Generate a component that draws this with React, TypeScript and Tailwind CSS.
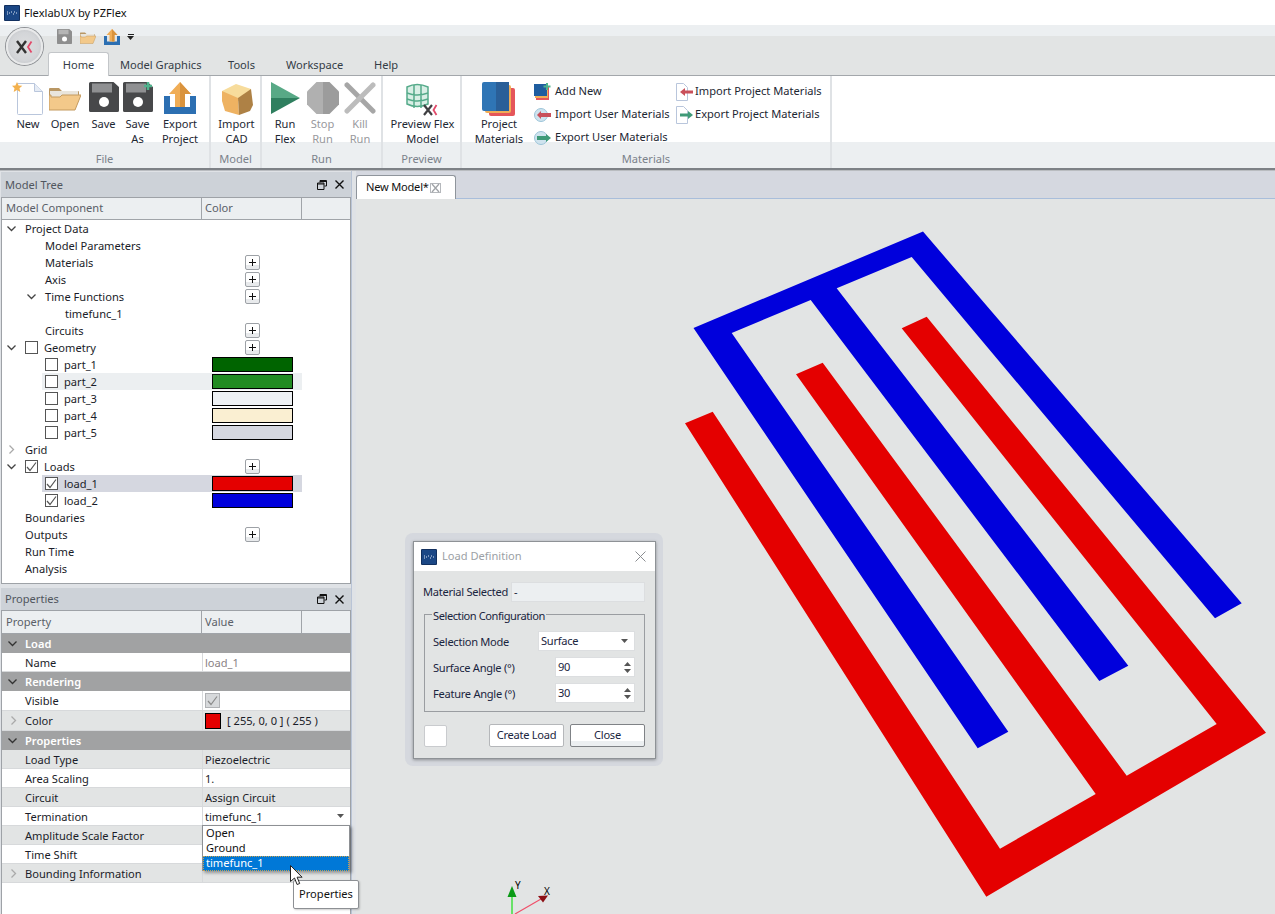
import React from "react";

const Logo = ({ s = 16 }: { s?: number }) => (
  <svg width={s} height={s} viewBox="0 0 16 16" className="shrink-0">
    <rect width="16" height="16" rx="1" fill="#12305f" />
    <rect x="1" y="1" width="14" height="14" fill="#1b4785" />
    <path d="M3 7h1M5 8h1M3 9h1M7 7h1M9 9h1M10 7h1M12 8h1" stroke="#dfe8f5" strokeWidth="1" />
  </svg>
);

const NewIcon = () => (
  <svg width="32" height="34" viewBox="0 0 32 34">
    <path d="M5.500 1.500h17l8 8v22a1 1 0 0 1-1 1h-23a1 1 0 0 1-1-1z" fill="#fff" stroke="#b9c6dc" />
    <path d="M22.500 1.500v8h8" fill="#e6ecf5" stroke="#b9c6dc" />
    <path d="M5 0l1.600 3.400 3.700.4-2.800 2.500.8 3.700L5 8l-3.300 2 .8-3.700L0 3.800l3.400-.4z" fill="#f3b14e" />
  </svg>
);
const OpenIcon = ({ s = 32 }: { s?: number }) => (
  <svg width={s} height={s * 0.75} viewBox="0 0 32 24">
    <path d="M0 2a1 1 0 0 1 1-1h9l3 3h16a1 1 0 0 1 1 1v4H0z" fill="#b99764" />
    <path d="M1 4h28v6H1z" fill="#e9e5dc" />
    <path d="M0 23V8h2v2h9l2-2h19l-6 15z" fill="#f3c98a" stroke="#c49a5e" strokeWidth="1" />
  </svg>
);
const Floppy = ({ s = 30, plus = false, c = "#47484a", l = "#8f9092" }: { s?: number; plus?: boolean; c?: string; l?: string }) => (
  <svg width={s} height={s} viewBox="0 0 30 30">
    <path d="M1.500 0h23L30 5v23.500a1.500 1.500 0 0 1-1.500 1.500h-27A1.500 1.500 0 0 1 0 28.500V1.500A1.500 1.500 0 0 1 1.500 0z" fill={c} />
    <rect x="3" y="1.500" width="20" height="9" fill={l} />
    <circle cx="15" cy="20" r="5" fill="#fff" />
    {plus && <path d="M25 0v8M21 4h8" stroke="#4fb38d" strokeWidth="2.500" />}
  </svg>
);
const ExportIcon = ({ s = 32 }: { s?: number }) => (
  <svg width={s} height={s} viewBox="0 0 32 32">
    <path d="M0 14h6v11h20V14h6v18H0z" fill="#2c6fb2" />
    <path d="M16 0l11 12h-6v13H11V12H5z" fill="#f0ad56" />
    <path d="M16 0l11 12h-6v13h-5z" fill="#d9933d" />
  </svg>
);
const CubeIcon = () => (
  <svg width="34" height="34" viewBox="0 0 34 34">
    <path d="M2 9l14-7 15 5-2 10-11 2L5 14z" fill="#f7dc9c" />
    <path d="M2 9l16 7 1 17-14-4-3-10z" fill="#eeb262" />
    <path d="M18 16l13-9 2 16-3 6-11 4z" fill="#ae8145" />
  </svg>
);
const RunIcon = () => (
  <svg width="29" height="32" viewBox="0 0 29 32">
    <path d="M0 0l29 16H0z" fill="#58a986" />
    <path d="M0 16h29L0 32z" fill="#2f7f5f" />
  </svg>
);
const StopIcon = () => (
  <svg width="32" height="32" viewBox="0 0 32 32">
    <path d="M9.500 0H16v32H9.500L0 22.500v-13z" fill="#b0b0b0" />
    <path d="M16 0h6.500L32 9.500v13L22.500 32H16z" fill="#9c9c9c" />
  </svg>
);
const KillIcon = () => (
  <svg width="32" height="32" viewBox="0 0 32 32">
    <path d="M3 3l26 26" stroke="#a6a6a6" strokeWidth="5" strokeLinecap="round" />
    <path d="M29 3L3 29" stroke="#bcbcbc" strokeWidth="5" strokeLinecap="round" />
  </svg>
);
const XMark = ({ x, y, k = 1 }: { x: number; y: number; k?: number }) => (
  <g transform={`translate(${x} ${y}) scale(${k})`}>
    <path d="M0 0l8 10M8 0L0 10" stroke="#3f3f42" strokeWidth="2.200" />
    <path d="M12.500 0L9.500 5l3 5" stroke="#e24a6a" strokeWidth="1.800" fill="none" />
  </g>
);
const PreviewIcon = () => (
  <svg width="36" height="34" viewBox="0 0 36 34">
    <path d="M2 5q10-5 21 0v17q-11 5-21 0z" fill="#d9efe6" stroke="#55ab8a" strokeWidth="1.500" />
    <path d="M9 3v23M16 3v23M2 11q10 4 21 0M2 17q10 4 21 0" stroke="#55ab8a" strokeWidth="1.500" fill="none" />
    <XMark x={19} y={23} />
  </svg>
);
const BooksIcon = () => (
  <svg width="34" height="34" viewBox="0 0 34 34">
    <rect x="7" y="6" width="26" height="28" rx="2" fill="#e5565a" />
    <rect x="3" y="3" width="26" height="28" rx="2" fill="#f0ad56" />
    <rect width="27" height="29" rx="2" fill="#2f75b5" />
    <rect x="14" width="13" height="29" fill="#2a5f98" />
  </svg>
);
const AddNewIcon = () => (
  <svg width="17" height="17" viewBox="0 0 17 17">
    <rect x="2" y="4" width="13" height="13" fill="#e5565a" />
    <rect x="1" y="3" width="13" height="12" fill="#f0ad56" />
    <rect y="1" width="13" height="12" fill="#1f5d9f" />
    <path d="M13 0v7M9.500 3.500h7" stroke="#4fb38d" strokeWidth="2" />
  </svg>
);
const DiscArrow = ({ c, left }: { c: string; left: boolean }) => (
  <svg width="17" height="14" viewBox="0 0 17 14">
    <circle cx="7" cy="7" r="6.500" fill="#cfe3ee" stroke="#9cc4d8" />
    <circle cx="7" cy="7" r="2" fill="#fff" />
    {left ? <path d="M3 7l4-4v2h10v4H7v2z" fill={c} /> : <path d="M17 7l-5-4v2H3v4h9v2z" fill={c} />}
  </svg>
);
const PageArrow = ({ c, left }: { c: string; left: boolean }) => (
  <svg width="17" height="18" viewBox="0 0 17 18">
    <path d="M.5.500h7l4 4v13H.5z" fill="#fff" stroke="#b9c6dc" />
    {left ? <path d="M4 9l5-4v2.500h8v3H9V13z" fill={c} /> : <path d="M17 9l-5-4v2.500H4v3h8V13z" fill={c} />}
  </svg>
);
const Chev = ({ open, light = false }: { open: boolean; light?: boolean }) => (
  <svg width="9" height="9" viewBox="0 0 9 9">
    {open ? (
      <path d="M.5 2.500l4 4 4-4" fill="none" stroke={light ? "#333" : "#444"} strokeWidth="1.300" />
    ) : (
      <path d="M2.500.500l4 4-4 4" fill="none" stroke="#aaa" strokeWidth="1.300" />
    )}
  </svg>
);
const Check = ({ c = "#555" }: { c?: string }) => (
  <svg width="11" height="11" viewBox="0 0 11 11">
    <path d="M1 6l3 3.500L10 1.500" fill="none" stroke={c} strokeWidth="1.200" />
  </svg>
);
const Tri = ({ up = false, c = "#555" }: { up?: boolean; c?: string }) => (
  <svg width="7" height="4" viewBox="0 0 7 4">
    <path d={up ? "M0 4l3.500-4L7 4z" : "M0 0l3.500 4L7 0z"} fill={c} />
  </svg>
);

const Btn = ({ w, icon, lines, off }: { w: string; icon: React.ReactNode; lines: string[]; off?: boolean }) => (
  <div className={`${w} flex flex-col items-center shrink-0 pt-[6px]`}>
    <div className="h-[34px] shrink-0 flex items-start justify-center">{icon}</div>
    <div className={`flex flex-col items-center shrink-0 leading-[15px] whitespace-nowrap ${off ? "text-[#98999d]" : "text-[#1d2733]"}`}>
      {lines.map((l) => (
        <span key={l}>{l}</span>
      ))}
    </div>
  </div>
);

const Group = ({ w, label, children }: { w: string; label: string; children: React.ReactNode }) => (
  <div className={`${w} flex flex-col shrink-0 border-r-2 border-[#dfe2e5]`}>
    <div className="h-[66px] flex relative z-10">{children}</div>
    <div className="h-[26px] bg-[#eceff1] flex items-center justify-center text-[#7b828b] pt-[9px]">{label}</div>
  </div>
);

const Small = ({ icon, label, w = "w-[19px]" }: { icon: React.ReactNode; label: string; w?: string }) => (
  <div className="h-[23px] shrink-0 flex items-center whitespace-nowrap text-[#1d2733]">
    <div className={`${w} shrink-0 flex items-center justify-start`}>{icon}</div>
    <span>{label}</span>
  </div>
);

const PanelHeader = ({ title, h }: { title: string; h: string }) => (
  <div className={`${h} shrink-0 bg-[#cdd2d8] flex items-center pl-[4px] pr-[7px] text-[#50565e]`}>
    <span className="flex-1 pt-[1px]">{title}</span>
    <svg width="10" height="10" viewBox="0 0 10 10" className="mr-[8px]">
      <path d="M3 2.500V.5h6.500V6H7.500M.5 3h6.500v6.500H.5z" fill="none" stroke="#111" strokeWidth="1" />
      <path d="M.5 4h6.500M3 1.500h6.500" stroke="#111" strokeWidth="1" />
    </svg>
    <svg width="9" height="9" viewBox="0 0 9 9">
      <path d="M.5.5l8 8M8.500.5l-8 8" stroke="#111" strokeWidth="1.400" />
    </svg>
  </div>
);

const Box = ({ checked }: { checked?: boolean }) => (
  <div className="w-[13px] h-[13px] border border-[#555] bg-white flex items-center justify-center shrink-0">{checked && <Check />}</div>
);
const Plus = () => (
  <div className="w-[15px] h-[15px] rounded-[2px] border border-[#9da1a6] bg-[linear-gradient(#ffffff_70%,#e8eaec_70%)] flex items-center justify-center">
    <svg width="7" height="7" viewBox="0 0 7 7">
      <path d="M3.500 0v7M0 3.500h7" stroke="#111" strokeWidth="1" />
    </svg>
  </div>
);
const Swatch = ({ c }: { c: string }) => <div className={`w-[81px] h-[15px] border border-black ${c}`} />;

const TreeRow = ({ pl, arrow, box, label, plus, boxOn }: { pl: string; arrow?: "open" | "closed"; box?: boolean; boxOn?: boolean; label: string; plus?: boolean }) => (
  <div className="h-[17px] flex items-center">
    <div className={`w-[200px] flex items-center ${pl}`}>
      <div className="w-[23px] flex justify-start pl-[5px] shrink-0">{arrow && <Chev open={arrow === "open"} />}</div>
      {box && (
        <div className="mr-[6px]">
          <Box checked={boxOn} />
        </div>
      )}
      <span className="pt-[2px]">{label}</span>
    </div>
    <div className="w-[100px] flex justify-center">{plus && <Plus />}</div>
  </div>
);

const ChildRow = ({ label, c, on, hl }: { label: string; c: string; on?: boolean; hl?: string }) => (
  <div className="h-[17px] flex">
    <div className="w-[40px] shrink-0" />
    <div className={`w-[260px] flex items-center ${hl ?? ""}`}>
      <div className="w-[160px] flex items-center pl-[3px]">
        <div className="mr-[6px]">
          <Box checked={on} />
        </div>
        <span className="pt-[2px]">{label}</span>
      </div>
      <div className="w-[100px] flex justify-center">
        <Swatch c={c} />
      </div>
    </div>
  </div>
);

const ColHead = ({ a, b, h }: { a: string; b: string; h: string }) => (
  <div className={`${h} shrink-0 flex bg-[#eceff1] border-b border-[#a0a4a9] text-[#5a6068]`}>
    <div className="w-[200px] flex items-center pl-[4px] border-r border-[#a0a4a9]">{a}</div>
    <div className="w-[100px] flex items-center pl-[3px] border-r border-[#a0a4a9]">{b}</div>
    <div className="flex-1" />
  </div>
);

const GroupRow = ({ label }: { label: string }) => (
  <div className="h-[19px] shrink-0 bg-[#a1a2a3] flex items-center text-white font-semibold">
    <div className="w-[23px] pl-[6px] flex">
      <Chev open light />
    </div>
    <span className="pt-[2px]">{label}</span>
  </div>
);

const PropRow = ({ label, alt, arrow, h = "h-[19px]", children }: { label: string; alt?: boolean; arrow?: boolean; h?: string; children?: React.ReactNode }) => (
  <div className={`${h} shrink-0 flex items-center border-b border-[#d7d9db] ${alt ? "bg-[#e2e4e4]" : "bg-white"}`}>
    <div className="w-[23px] pl-[7px] flex shrink-0">{arrow && <Chev open={false} />}</div>
    <div className="w-[177px] shrink-0 pt-[2px]">{label}</div>
    <div className="flex-1 border-l border-[#d7d9db] h-full flex items-center pl-[2px]">{children}</div>
  </div>
);

const Spin = ({ v }: { v: string }) => (
  <div className="w-[80px] h-[20px] bg-white border border-[#dcdee0] flex items-center pl-[2px] pr-[3px] justify-between">
    <span>{v}</span>
    <div className="flex flex-col gap-[3px]">
      <Tri up />
      <Tri />
    </div>
  </div>
);

export default function App() {
  return (
    <div className="w-[1275px] h-[914px] relative overflow-hidden flex flex-col bg-white text-[11.1px] text-[#1d2733] font-['Noto_Sans',sans-serif]">
      <div className="h-[25px] shrink-0 flex items-center pl-[4px] gap-[4px] bg-white text-[#111]">
        <Logo />
        <span className="pt-[2px]">FlexlabUX by PZFlex</span>
      </div>

      <div className="h-[51px] shrink-0 flex flex-col bg-[linear-gradient(#eceff1_11px,#e2e4e4_11px)]">
        <div className="h-[27px] flex items-start pl-[57px] pt-[4px]">
          <div className="w-[23px]">
            <Floppy s={15} c="#8e8e8e" l="#b5b5b5" />
          </div>
          <div className="w-[24px] pt-[3px]">
            <OpenIcon s={16} />
          </div>
          <div className="w-[23px]">
            <ExportIcon s={16} />
          </div>
          <div className="pt-[5px] flex flex-col items-center gap-[1px]">
            <div className="w-[6px] h-[1px] bg-[#222]" />
            <Tri c="#222" />
          </div>
        </div>
        <div className="h-[24px] flex items-end pl-[48px] border-b border-[#a3a7ab] text-[#343c46]">
          <div className="w-[61px] h-[24px] -mb-px bg-white border border-b-0 border-[#c3c6c9] rounded-t-[3px] flex items-center justify-center pt-[1px]">Home</div>
          <div className="w-[11px]" />
          <div className="w-[108px] h-[23px] flex items-center whitespace-nowrap pt-[3px]">Model Graphics</div>
          <div className="w-[58px] h-[23px] flex items-center pt-[3px]">Tools</div>
          <div className="w-[88px] h-[23px] flex items-center pt-[3px]">Workspace</div>
          <div className="h-[23px] flex items-center pt-[3px]">Help</div>
        </div>
      </div>

      <div className="h-[92px] shrink-0 flex bg-white">
        <Group w="w-[211px]" label="File">
          <div className="w-[9px]" />
          <Btn w="w-[38px]" icon={<NewIcon />} lines={["New"]} />
          <Btn w="w-[36px]" icon={<div className="pt-[5px]"><OpenIcon /></div>} lines={["Open"]} />
          <Btn w="w-[41px]" icon={<Floppy />} lines={["Save"]} />
          <Btn w="w-[27px]" icon={<Floppy plus />} lines={["Save", "As"]} />
          <Btn w="w-[58px]" icon={<ExportIcon />} lines={["Export", "Project"]} />
        </Group>
        <Group w="w-[51px]" label="Model">
          <div className="w-[3px]" />
          <Btn w="w-[45px]" icon={<CubeIcon />} lines={["Import", "CAD"]} />
        </Group>
        <Group w="w-[121px]" label="Run">
          <div className="w-[4px]" />
          <Btn w="w-[38px]" icon={<RunIcon />} lines={["Run", "Flex"]} />
          <Btn w="w-[37px]" icon={<StopIcon />} lines={["Stop", "Run"]} off />
          <Btn w="w-[38px]" icon={<KillIcon />} lines={["Kill", "Run"]} off />
        </Group>
        <Group w="w-[79px]" label="Preview">
          <div className="w-[2px]" />
          <Btn w="w-[75px]" icon={<PreviewIcon />} lines={["Preview Flex", "Model"]} />
        </Group>
        <Group w="w-[370px]" label="Materials">
          <div className="w-[9px]" />
          <Btn w="w-[56px]" icon={<BooksIcon />} lines={["Project", "Materials"]} />
          <div className="w-[7px]" />
          <div className="flex flex-col pt-[4px] w-[142px] shrink-0">
            <Small icon={<AddNewIcon />} label="Add New" w="w-[21px]" />
            <Small icon={<DiscArrow c="#c9505a" left />} label="Import User Materials" w="w-[21px]" />
            <Small icon={<DiscArrow c="#3f9a78" left={false} />} label="Export User Materials" w="w-[21px]" />
          </div>
          <div className="flex flex-col pt-[4px]">
            <Small icon={<PageArrow c="#c9505a" left />} label="Import Project Materials" />
            <Small icon={<PageArrow c="#3f9a78" left={false} />} label="Export Project Materials" />
          </div>
        </Group>
        <div className="flex-1 flex flex-col">
          <div className="h-[66px]" />
          <div className="h-[26px] bg-[#eceff1]" />
        </div>
      </div>
      <div className="h-[3px] shrink-0 bg-[#7d8186] border-b border-[#b9bcc0]" />

      <div className="flex-1 flex min-h-0">
        <div className="w-[352px] shrink-0 flex flex-col pl-[1px] pt-[1px] bg-[#dfe2e6] border-r border-[#b9c4d6]">
          <PanelHeader title="Model Tree" h="h-[25px]" />
          <div className="h-[387px] shrink-0 flex flex-col border border-[#9ea2a7] bg-white text-[#1a1c28]">
            <ColHead a="Model Component" b="Color" h="h-[22px]" />
            <div>
              <TreeRow pl="pl-0" arrow="open" label="Project Data" />
              <TreeRow pl="pl-[20px]" label="Model Parameters" />
              <TreeRow pl="pl-[20px]" label="Materials" plus />
              <TreeRow pl="pl-[20px]" label="Axis" plus />
              <TreeRow pl="pl-[20px]" arrow="open" label="Time Functions" plus />
              <TreeRow pl="pl-[40px]" label="timefunc_1" />
              <TreeRow pl="pl-[20px]" label="Circuits" plus />
              <TreeRow pl="pl-0" arrow="open" box label="Geometry" plus />
              <ChildRow label="part_1" c="bg-[#006400]" />
              <ChildRow label="part_2" c="bg-[#228b22]" hl="bg-[#eceff1]" />
              <ChildRow label="part_3" c="bg-[#eef1f4]" />
              <ChildRow label="part_4" c="bg-[#faefd2]" />
              <ChildRow label="part_5" c="bg-[#d5d7e0]" />
              <TreeRow pl="pl-0" arrow="closed" label="Grid" />
              <TreeRow pl="pl-0" arrow="open" box boxOn label="Loads" plus />
              <ChildRow label="load_1" c="bg-[#e40000]" on hl="bg-[#d5d7e0]" />
              <ChildRow label="load_2" c="bg-[#0000dc]" on />
              <TreeRow pl="pl-0" label="Boundaries" />
              <TreeRow pl="pl-0" label="Outputs" plus />
              <TreeRow pl="pl-0" label="Run Time" />
              <TreeRow pl="pl-0" label="Analysis" />
            </div>
          </div>
          <div className="h-[4px] shrink-0" />
          <PanelHeader title="Properties" h="h-[22px]" />
          <div className="flex-1 flex flex-col border-x border-t border-[#9ea2a7] bg-white text-[#1a1c28]">
            <ColHead a="Property" b="Value" h="h-[23px]" />
            <GroupRow label="Load" />
            <PropRow label="Name">
              <span className="text-[#8a7f84] pt-[2px]">load_1</span>
            </PropRow>
            <GroupRow label="Rendering" />
            <PropRow label="Visible" h="h-[20px]">
              <div className="w-[15px] h-[15px] bg-[#d7d9db] border border-[#b0b2b5] flex items-center justify-center">
                <Check c="#8a8a8a" />
              </div>
            </PropRow>
            <PropRow label="Color" alt arrow h="h-[20px]">
              <div className="w-[16px] h-[16px] bg-[#e40000] border border-black mr-[6px]" />
              <span className="pt-[2px]">[ 255, 0, 0 ] ( 255 )</span>
            </PropRow>
            <GroupRow label="Properties" />
            <PropRow label="Load Type" alt><span className="pt-[2px]">Piezoelectric</span></PropRow>
            <PropRow label="Area Scaling"><span className="pt-[2px]">1.</span></PropRow>
            <PropRow label="Circuit" alt><span className="pt-[2px]">Assign Circuit</span></PropRow>
            <PropRow label="Termination">
              <div className="flex-1 flex items-center justify-between pr-[6px]">
                <span className="pt-[2px]">timefunc_1</span>
                <Tri />
              </div>
            </PropRow>
            <PropRow label="Amplitude Scale Factor" alt />
            <PropRow label="Time Shift" />
            <PropRow label="Bounding Information" alt arrow />
          </div>
        </div>

        <div className="flex-1 flex flex-col pl-[4px] bg-[#dfe2e6] min-w-0">
          <div className="h-[28px] shrink-0 flex items-end bg-[#d5d8e0] border-b border-[#a9bedb]">
            <div className="w-[100px] h-[24px] -mb-px bg-white border border-b-0 border-[#8f959c] rounded-t-[3px] flex items-center pl-[9px] text-[#111]">
              <span className="w-[64px] tracking-[-0.02em] whitespace-nowrap">New Model*</span>
              <svg width="11" height="10" viewBox="0 0 11 10">
                <rect x=".5" y=".5" width="10" height="9" fill="none" stroke="#b5b8bc" />
                <path d="M2 1l7 8M9 1L2 9" stroke="#a0a3a7" strokeWidth="1.300" />
              </svg>
            </div>
          </div>
          <div className="flex-1 relative bg-[#e2e4e4]">
            <svg className="absolute inset-0" width="919" height="715" viewBox="356 199 919 715">
              <polygon
                fill="#0000dc"
                points="693.500,328 923,231.500 1241.700,603.300 1215,618.300 911.700,257 836.700,288.300 1128.300,665.700 1099.300,681 810.700,300 731.700,333 1008.300,731.700 977.700,748.300"
              />
              <polygon
                fill="#e40000"
                points="685,423.300 712.700,411.700 1000,848.700 1095.700,794 796,374.300 822.700,362.700 1126.700,775.700 1216.700,724 901.700,328.300 926.700,316.700 1266,732.700 986.300,896.700"
              />
              <path d="M512 896V914" stroke="#3fe03f" strokeWidth="1.500" />
              <path d="M512 886l4.500 11h-9z" fill="#0a9a16" />
              <path d="M515 914L541 899" stroke="#f0506a" strokeWidth="1.200" />
              <path d="M538 896l10-.5-5 7z" fill="#8c0f14" />
            </svg>
            <span className="absolute left-[159px] top-[681px] text-[10px] leading-none text-black">Y</span>
            <span className="absolute left-[188px] top-[687px] text-[10px] leading-none text-black">X</span>

            <div className="absolute left-[49px] top-[334px] w-[258px] h-[233px] rounded-[8px] bg-[#d5d8de] p-[8px]">
              <div className="w-[243px] h-[218px] flex flex-col border border-[#8e9296] bg-[#e2e4e4] shadow-[0_1px_3px_rgba(0,0,0,0.35)] text-[#1a2540]">
                <div className="h-[29px] bg-white flex items-center pl-[7px] pr-[9px] gap-[5px] shrink-0">
                  <Logo />
                  <span className="flex-1 text-[#9b9fa5]">Load Definition</span>
                  <svg width="11" height="11" viewBox="0 0 11 11">
                    <path d="M.5.5l10 10M10.500.5l-10 10" stroke="#8a8d91" strokeWidth="1" />
                  </svg>
                </div>
                <div className="flex-1 flex flex-col px-[10px] pt-[11px] tracking-[-0.025em]">
                  <div className="flex items-center h-[20px]">
                    <span className="whitespace-nowrap w-[88px] -ml-[1px] pt-[1px] shrink-0">Material Selected</span>
                    <div className="flex-1 h-[20px] bg-[#eceff1] border border-[#dcdee0] flex items-center pl-[2px]">-</div>
                  </div>
                  <div className="relative mt-[12px] h-[98px] border border-[#9a9da1] pl-[8px] pr-[9px] pt-[16px] flex flex-col gap-[6px]">
                    <span className="absolute left-[7px] -top-[7px] px-[1px] leading-[15px] bg-[#e2e4e4] tracking-[-0.04em] whitespace-nowrap">Selection Configuration</span>
                    <div className="flex items-center justify-between h-[20px]">
                      <span className="pt-[2px]">Selection Mode</span>
                      <div className="w-[97px] h-[20px] bg-white border border-[#dcdee0] flex items-center pl-[2px] pr-[6px] justify-between">
                        <span>Surface</span>
                        <Tri />
                      </div>
                    </div>
                    <div className="flex items-center justify-between h-[20px]">
                      <span className="pt-[2px]">Surface Angle (°)</span>
                      <Spin v="90" />
                    </div>
                    <div className="flex items-center justify-between h-[20px]">
                      <span className="pt-[2px]">Feature Angle (°)</span>
                      <Spin v="30" />
                    </div>
                  </div>
                  <div className="mt-[12px] flex items-center">
                    <div className="w-[23px] h-[22px] bg-white border border-[#c9cbce] rounded-[2px]" />
                    <div className="w-[42px]" />
                    <div className="w-[75px] h-[23px] bg-white border border-[#b5b7ba] rounded-[2px] flex items-center justify-center">Create Load</div>
                    <div className="w-[6px]" />
                    <div className="w-[75px] h-[23px] bg-[linear-gradient(#ffffff_75%,#eceff1_75%)] border border-[#7f8286] rounded-[2px] flex items-center justify-center">Close</div>
                  </div>
                </div>
              </div>
            </div>
          </div>
        </div>
      </div>

      <div className="absolute left-[6px] top-[28px] w-[37px] h-[37px] rounded-full border-2 border-[#e8e9ea] bg-[radial-gradient(circle,#dedfe0_0%,#d3d5d8_60%,#b9bbbe_100%)] shadow-[0_0_0_1px_#8f9296] flex items-center justify-center">
        <svg width="18" height="14" viewBox="0 0 18 14">
          <path d="M1 1l9 12M10 1L1 13" stroke="#333" strokeWidth="2.400" />
          <path d="M15.500 1.500L12 7l3.500 5.500" stroke="#e24a6a" strokeWidth="1.800" fill="none" />
        </svg>
      </div>

      <div className="absolute left-[202px] top-[825px] w-[148px] h-[46px] bg-white border border-[#8d9094] shadow-[2px_2px_3px_rgba(0,0,0,0.35)] flex flex-col text-[#111] leading-[15px]">
        <div className="pl-[3px] h-[15px] flex items-center pb-[2px]">Open</div>
        <div className="pl-[3px] h-[15px] flex items-center pb-[2px]">Ground</div>
        <div className="pl-[3px] h-[15px] flex items-center pb-[2px] bg-[#0078d7] text-white outline-1 outline-dotted outline-[#c9a04a] -outline-offset-1">timefunc_1</div>
      </div>

      <div className="absolute left-[293px] top-[880px] w-[66px] h-[29px] bg-white border border-[#8d9094] rounded-[2px] flex items-center justify-center text-[#111] shadow-[1px_1px_2px_rgba(0,0,0,0.2)]">
        Properties
      </div>

      <svg className="absolute left-[290px] top-[865px]" width="13" height="21" viewBox="0 0 13 21">
        <path d="M.5.500v16l4-3.500 2.600 6.500 2.600-1-2.600-6.300h5z" fill="#fff" stroke="#222" strokeWidth="1" />
      </svg>
    </div>
  );
}
